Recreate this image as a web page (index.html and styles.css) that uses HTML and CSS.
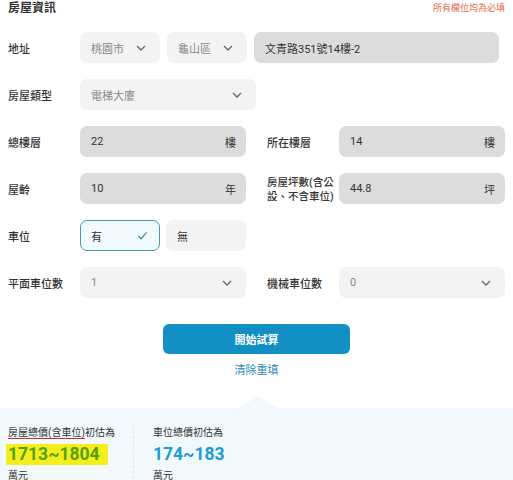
FILE: index.html
```html
<!DOCTYPE html>
<html lang="zh-Hant">
<head>
<meta charset="utf-8">
<link rel="stylesheet" href="styles.css">
</head>
<body>
<div class="form">
  <div class="head">
    <div class="title">房屋資訊</div>
    <div class="req">所有欄位均為必填</div>
  </div>
  <div class="grid">
    <div class="label">地址</div>
    <div class="span4 addr">
      <div class="field select w80"><span class="ph">桃園市</span><svg class="chev" viewBox="0 0 10 6"><path d="M1 1l4 4 4-4"/></svg></div>
      <div class="field select w80"><span class="ph">龜山區</span><svg class="chev" viewBox="0 0 10 6"><path d="M1 1l4 4 4-4"/></svg></div>
      <div class="field input grow"><span class="val">文青路351號14樓-2</span></div>
    </div>

    <div class="label">房屋類型</div>
    <div class="span4"><div class="field select w176"><span class="ph">電梯大廈</span><svg class="chev" viewBox="0 0 10 6"><path d="M1 1l4 4 4-4"/></svg></div></div>

    <div class="label">總樓層</div>
    <div class="field input"><span class="val">22</span><span class="unit">樓</span></div>
    <div class="label right">所在樓層</div>
    <div class="field input"><span class="val">14</span><span class="unit">樓</span></div>

    <div class="label">屋齡</div>
    <div class="field input"><span class="val">10</span><span class="unit">年</span></div>
    <div class="label right two">房屋坪數(含公<br>設、不含車位)</div>
    <div class="field input"><span class="val">44.8</span><span class="unit">坪</span></div>

    <div class="label">車位</div>
    <div class="span4 opts">
      <div class="field opt on"><span class="val">有</span><svg class="check" viewBox="0 0 12 10"><path d="M1.5 5.5l3 3 6-7"/></svg></div>
      <div class="field opt"><span class="val">無</span></div>
    </div>

    <div class="label">平面車位數</div>
    <div class="field select"><span class="ph">1</span><svg class="chev" viewBox="0 0 10 6"><path d="M1 1l4 4 4-4"/></svg></div>
    <div class="label right">機械車位數</div>
    <div class="field select"><span class="ph">0</span><svg class="chev" viewBox="0 0 10 6"><path d="M1 1l4 4 4-4"/></svg></div>
  </div>

  <div class="actions">
    <button class="btn">開始試算</button>
    <a class="reset">清除重填</a>
  </div>
</div>

<div class="result">
  <svg class="notch" viewBox="0 0 60 14" preserveAspectRatio="none"><path d="M0 14 C18 14 24 1 30 1 C36 1 42 14 60 14 Z"/></svg>
  <div class="col first">
    <div class="rlabel"><span class="ul">房屋總價(含車位)</span>初估為</div>
    <div class="num green"><span class="hl">1713~1804</span></div>
    <div class="unit2">萬元</div>
  </div>
  <div class="col second">
    <div class="rlabel">車位總價初估為</div>
    <div class="num blue">174~183</div>
    <div class="unit2">萬元</div>
  </div>
</div>
</body>
</html>
```

FILE: styles.css
```css
* { box-sizing: border-box; }
html, body { margin: 0; padding: 0; background: #fff; }
body {
  font-family: Roboto, "Noto Sans CJK TC", sans-serif;
  color: #333;
  width: 513px;
  height: 480px;
  overflow: hidden;
}
.form { padding: 0 8px; }
.head {
  display: flex;
  justify-content: space-between;
  align-items: center;
  height: 17px;
}
.title { font-size: 12px; font-weight: 700; color: #333; line-height: 17px; }
.req { font-size: 9px; color: #e36a4c; line-height: 17px; }

.grid {
  margin-top: 15px;
  display: grid;
  grid-template-columns: 72px 166px 93px 166px;
  row-gap: 16px;
  grid-auto-rows: 31px;
}
.label {
  font-size: 11px;
  font-weight: 500;
  color: #333;
  display: flex;
  align-items: center;
  white-space: nowrap;
}
.label.right { padding-left: 21px; }
.label.two { font-size: 10.5px; line-height: 14px; padding-top: 3px; }
.span4 { grid-column: 2 / 5; display: flex; gap: 7px; }
.field {
  height: 31px;
  border-radius: 7px;
  display: flex;
  align-items: center;
  justify-content: space-between;
  padding: 0 11px;
  font-size: 11px;
}
.select { background: #f3f3f3; }
.input { background: #dcdcdc; }
.w80 { width: 80px; }
.w176 { width: 176px; }
.grow { flex: 1; margin-right: 6px; }
.ph { color: #888; }
.val { color: #333; }
.unit { color: #333; font-size: 11px; margin-right: -1px; }
.chev { width: 10px; height: 6px; margin-right: 3px; }
.chev path { fill: none; stroke: #666; stroke-width: 1.3; }
.opts { gap: 6px; }
.opt { width: 80px; background: #f3f3f3; }
.opt.on { background: #f1fafc; border: 1px solid #3f9cae; padding: 0 10px; }
.check { width: 11px; height: 9px; margin-right: 1px; }
.check path { fill: none; stroke: #3b9aab; stroke-width: 1.5; }

.actions {
  display: flex;
  flex-direction: column;
  align-items: center;
  margin-top: 26px;
}
.btn {
  width: 187px;
  height: 30px;
  border: none;
  border-radius: 6px;
  background: #1290c4;
  color: #fff;
  font-family: Roboto, "Noto Sans CJK TC", sans-serif;
  font-size: 11px;
  font-weight: 700;
}
.reset {
  margin-top: 9px;
  font-size: 11px;
  color: #1f8ab4;
  line-height: 15px;
}

.result {
  position: relative;
  margin-top: 30px;
  background: #f2f9fd;
  height: 80px;
  display: flex;
  padding: 18px 8px 0;
}
.notch {
  position: absolute;
  left: 228px;
  top: -12px;
  width: 60px;
  height: 13px;
}
.notch path { fill: #f2f9fd; }
.col { display: flex; flex-direction: column; }
.first { width: 126px; border-right: 1px dashed #dde3e8; }
.second { padding-left: 19px; }
.rlabel { font-size: 10px; color: #333; line-height: 14px; }
.ul { border-bottom: 1.5px solid #d0282e; }
.num {
  font-size: 17.5px;
  font-weight: 700;
  line-height: 21px;
  margin-top: 4px;
  font-family: Roboto, "Noto Sans", sans-serif;
}
.green { color: #5a9f10; margin-left: -2px; }
.hl { background: #f4ef1c; padding: 0 8px 0 2px; display: inline-block; }
.blue { color: #1e9bd0; }
.unit2 { font-size: 10px; color: #333; margin-top: 2px; }
```
